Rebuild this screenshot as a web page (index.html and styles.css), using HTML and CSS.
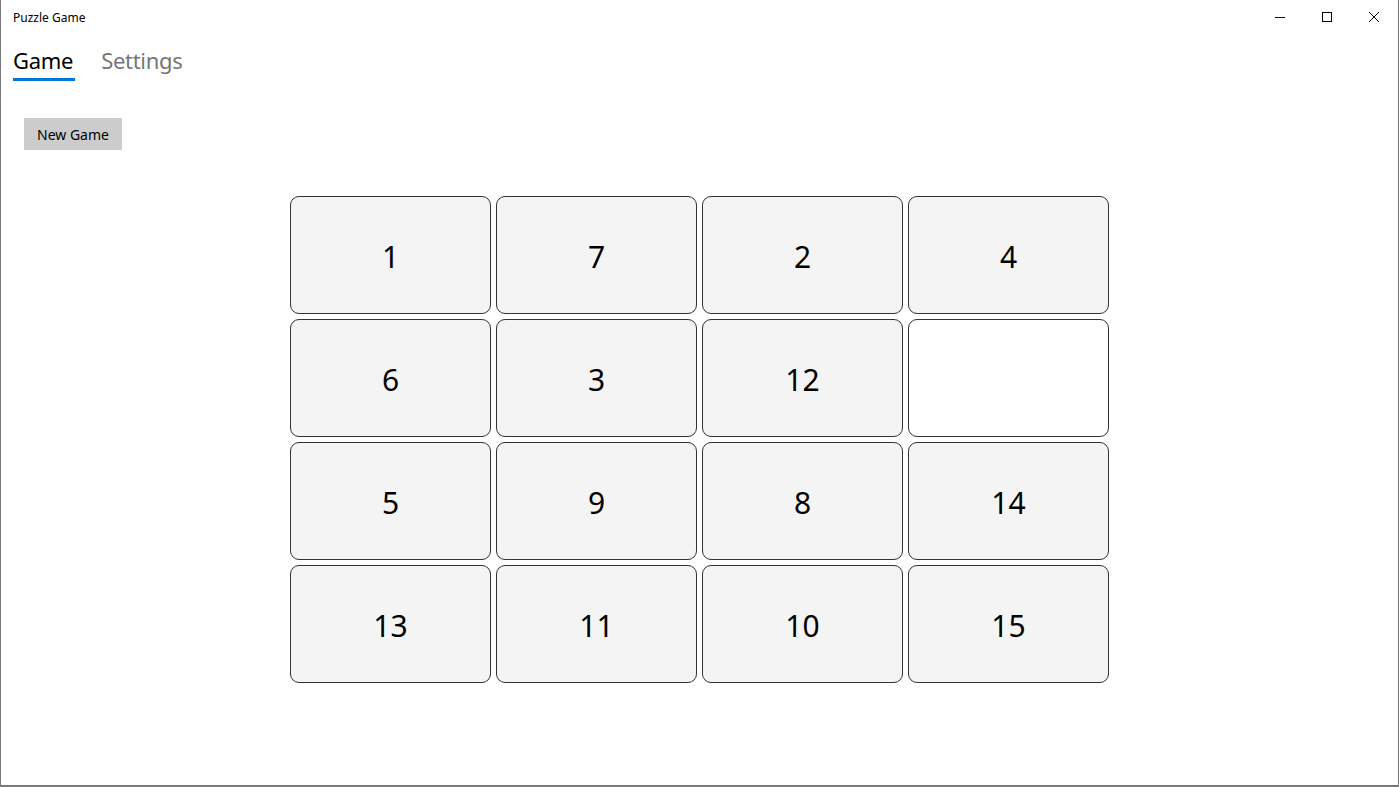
FILE: index.html
```html
<!DOCTYPE html>
<html lang="en">
<head>
    <meta charset="UTF-8">
    <meta name="viewport" content="width=device-width, initial-scale=1.0">
    <title>Puzzle Game</title>
    <link rel="stylesheet" href="styles.css">
</head>
<body>
    <div class="window">
        <!-- Title bar -->
        <div class="titlebar">
            <span class="title">Puzzle Game</span>
            <div class="controls">
                <span class="ctrl">
                    <svg width="10" height="10" viewBox="0 0 10 10"><path d="M0 5.5h10" stroke="#000" stroke-width="1"/></svg>
                </span>
                <span class="ctrl">
                    <svg width="10" height="10" viewBox="0 0 10 10"><rect x="0.5" y="0.5" width="9" height="9" fill="none" stroke="#000" stroke-width="1"/></svg>
                </span>
                <span class="ctrl">
                    <svg width="10" height="10" viewBox="0 0 10 10"><path d="M0 0L10 10M10 0L0 10" stroke="#000" stroke-width="1"/></svg>
                </span>
            </div>
        </div>

        <!-- Tabs -->
        <div class="tabs">
            <a href="#" class="tab active">Game</a>
            <a href="#" class="tab">Settings</a>
        </div>

        <div class="toolbar">
            <button class="new-game">New Game</button>
        </div>

        <!-- Board -->
        <div class="board" id="board"></div>
    </div>

    <script>
        const tiles = [1, 7, 2, 4, 6, 3, 12, 0, 5, 9, 8, 14, 13, 11, 10, 15];
        const board = document.getElementById("board");

        tiles.forEach(function(n) {
            const tile = document.createElement("div");
            tile.className = n ? "tile" : "tile empty";
            tile.textContent = n ? n : "";
            board.appendChild(tile);
        });
    </script>
</body>
</html>
```

FILE: styles.css
```css
body {
    margin: 0;
    padding: 0;
    font-family: "Noto Sans", "Open Sans", sans-serif;
    background-color: #fff;
}

.window {
    height: 787px;
    box-sizing: border-box;
    border: 1px solid #7a7a7a;
    border-top: none;
    border-bottom-width: 2px;
    overflow: hidden;
}

/* Title bar */
.titlebar {
    height: 34px;
    display: flex;
    align-items: center;
    justify-content: space-between;
}

.title {
    font-size: 12px;
    color: #000;
    padding-left: 12px;
}

.controls {
    display: flex;
    height: 100%;
    margin-right: 1px;
}

.ctrl {
    width: 47px;
    display: flex;
    align-items: center;
    justify-content: center;
}

/* Tabs */
.tabs {
    display: flex;
    gap: 26px;
    padding-left: 12px;
    margin-top: 10px;
}

.tab {
    font-size: 22px;
    letter-spacing: -0.3px;
    line-height: 32px;
    color: #767676;
    text-decoration: none;
    padding-bottom: 2px;
    border-bottom: 3px solid transparent;
}

.tab.active {
    color: #000;
    padding-right: 2px;
    border-bottom-color: #0078d7;
}

/* Toolbar */
.toolbar {
    padding: 37px 0 0 23px;
}

.new-game {
    font-family: inherit;
    font-size: 14px;
    height: 32px;
    padding: 0 13px;
    background-color: #cccccc;
    border: none;
    color: #000;
    cursor: pointer;
}

/* Board */
.board {
    display: grid;
    grid-template-columns: repeat(4, 201px);
    grid-auto-rows: 118px;
    gap: 5px;
    justify-content: center;
    margin-top: 46px;
}

.tile {
    box-sizing: border-box;
    border: 1.5px solid #333;
    border-radius: 9px;
    background-color: #f4f4f4;
    display: flex;
    align-items: center;
    justify-content: center;
    font-size: 30px;
    color: #000;
    padding-top: 2px;
}

.tile.empty {
    background-color: #fff;
}
```
